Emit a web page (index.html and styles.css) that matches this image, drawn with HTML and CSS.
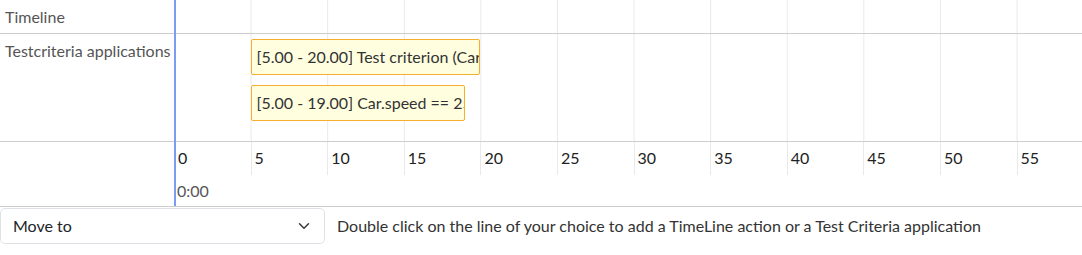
FILE: index.html
```html
<!DOCTYPE html>
<html lang="en">
<head>
<meta charset="utf-8">
<title>Timeline</title>
<link rel="stylesheet" href="styles.css">
</head>
<body>
<div class="chart">
  <div class="row row-timeline">
    <div class="label">Timeline</div>
    <div class="track grid"></div>
  </div>
  <div class="row row-criteria">
    <div class="label">Testcriteria applications</div>
    <div class="track grid lanes">
      <div class="chip" style="margin-left:76.6px;width:229.8px">[5.00 - 20.00] Test criterion (Car.speed == 25)</div>
      <div class="chip" style="margin-left:76.6px;width:214.5px">[5.00 - 19.00] Car.speed == 25</div>
    </div>
  </div>
  <div class="row row-axis">
    <div class="label"></div>
    <div class="track">
      <div class="ticks">
        <span class="tick">0</span><span class="tick">5</span><span class="tick">10</span><span class="tick">15</span><span class="tick">20</span><span class="tick">25</span><span class="tick">30</span><span class="tick">35</span><span class="tick">40</span><span class="tick">45</span><span class="tick">50</span><span class="tick">55</span>
      </div>
      <div class="cursor-time">0:00</div>
    </div>
  </div>
  <div class="cursor"></div>
</div>
<div class="toolbar">
  <div class="select">
    <span class="select-value">Move to</span>
    <svg class="chevron" width="16" height="12" viewBox="0 0 16 16" aria-hidden="true"><path d="m2 5 6 6 6-6" fill="none" stroke="#343a40" stroke-width="2" stroke-linecap="round" stroke-linejoin="round"/></svg>
  </div>
  <span class="hint">Double click on the line of your choice to add a TimeLine action or a Test Criteria application</span>
</div>
</body>
</html>
```
FILE: styles.css
```css
* { box-sizing: border-box; }
html, body { background: #fff; }
body {
  margin: 0;
  font-family: Lato, "Open Sans", sans-serif;
  font-size: 16px;
  line-height: 24px;
  color: #333;
}
.chart {
  position: relative;
  width: 1082px;
  overflow: hidden;
}
.row {
  display: flex;
  border-bottom: 1px solid #cdcdcd;
}
.label {
  flex: none;
  width: 174px;
  padding: 5px 5px 0 5px;
  color: #555;
  white-space: nowrap;
}
.track {
  flex: 1;
  min-width: 0;
  overflow: hidden;
}
.grid {
  background-image: linear-gradient(to right, #e9e9e9 1px, transparent 1px);
  background-size: 76.6px 100%;
}
.row-timeline { height: 34px; }
.lanes {
  display: flex;
  flex-direction: column;
  align-items: flex-start;
  gap: 10px;
  padding: 5px 0 20px;
}
.chip {
  flex: none;
  height: 36px;
  padding: 5px;
  border: 1px solid #f7ae2c;
  border-radius: 2px;
  background: #ffffe0;
  color: #333;
  white-space: nowrap;
  overflow: hidden;
}
.ticks {
  display: flex;
  height: 33px;
}
.tick {
  flex: none;
  width: 76.6px;
  height: 33px;
  padding: 4px 0 0 3px;
  border-left: 1px solid #e9e9e9;
  color: #222;
}
.cursor-time {
  padding: 4px 0 3px 3px;
  color: #555;
}
.cursor {
  position: absolute;
  left: 174px;
  top: 0;
  width: 2px;
  height: 206px;
  background: #7c9cf4;
}
.toolbar {
  display: flex;
  align-items: center;
  gap: 12px;
  margin-top: 1px;
}
.select {
  flex: none;
  display: flex;
  align-items: center;
  justify-content: space-between;
  width: 325px;
  height: 36px;
  padding: 5px 12px;
  border: 1px solid #dee2e6;
  border-radius: 5px;
  color: #212529;
  background: #fff;
}
.chevron { display: block; }
.hint { color: #333; }
```
